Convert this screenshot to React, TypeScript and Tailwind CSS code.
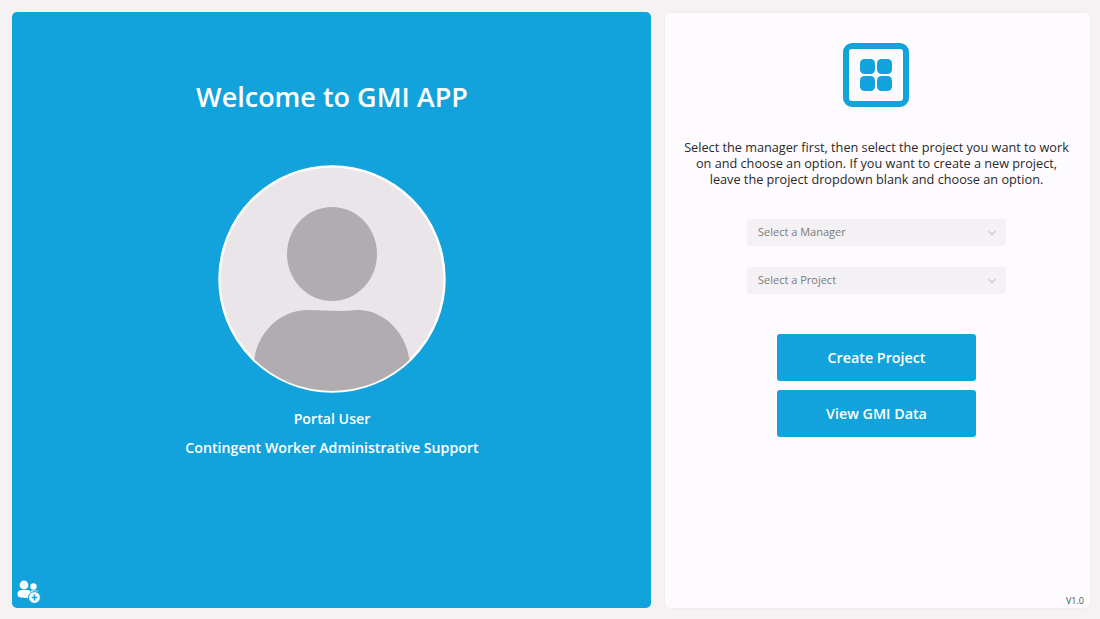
import { ChevronDown } from 'lucide-react';

function Avatar() {
  return (
    <svg viewBox="0 0 228 228" className="h-[228px] w-[228px]">
      <defs>
        <clipPath id="avatar-clip">
          <circle cx="114" cy="114" r="112" />
        </clipPath>
      </defs>
      <circle cx="114" cy="114" r="112.5" fill="#e9e5e9" stroke="#ffffff" strokeWidth="2.5" />
      <g clipPath="url(#avatar-clip)" fill="#b0acaf">
        <ellipse cx="114" cy="89" rx="45" ry="47" />
        <path d="M36 198 C38 168 62 145 90 145 C106 145 122 147 138 145 C166 144 189 168 192 198 L192 228 L36 228 Z" />
      </g>
    </svg>
  );
}

function AppLogo() {
  return (
    <svg viewBox="0 0 66 64" className="mr-[2px] h-16 w-[66px]" fill="#12a3dd">
      <rect x="3" y="3" width="60" height="58" rx="6" fill="none" stroke="#12a3dd" strokeWidth="6" />
      <rect x="17" y="16" width="15" height="15" rx="4.5" />
      <rect x="34" y="16" width="15" height="15" rx="4.5" />
      <rect x="17" y="33" width="15" height="15" rx="4.5" />
      <rect x="34" y="33" width="15" height="15" rx="4.5" />
    </svg>
  );
}

function AddUsersIcon() {
  return (
    <svg viewBox="0 0 24 24" className="h-6 w-6">
      <circle cx="7" cy="5" r="4.4" fill="#ffffff" />
      <path d="M0.5 14 C0.5 11 3 10 5 10 L10.5 10 C12.5 10 13.5 11 14 12.5 C12 14 11 16 11 18 L3.5 17.5 C1.5 17.2 0.5 16 0.5 14 Z" fill="#ffffff" />
      <circle cx="16.5" cy="6.5" r="3.2" fill="#ffffff" />
      <path d="M14 10.5 L19.5 10.5 C20.5 10.5 21 11 21.3 11.5 C18 10.8 15.5 11.5 14.5 12.5 Z" fill="#ffffff" />
      <circle cx="17.5" cy="17.5" r="5.8" fill="#ffffff" stroke="#12a3dd" strokeWidth="0.8" />
      <path d="M17.5 14.6 V20.4 M14.6 17.5 H20.4" stroke="#12a3dd" strokeWidth="1.6" />
    </svg>
  );
}

function SelectBox({ label }: { label: string }) {
  return (
    <div className="flex h-[27px] w-[259px] items-center justify-between rounded-[3px] bg-[#f3f1f3] pr-[8px] pl-[11px] text-[11px] text-[#7d7a7d]">
      <span>{label}</span>
      <ChevronDown className="h-3 w-3 text-[#8d8a8d]" strokeWidth={1.5} />
    </div>
  );
}

function ActionButton({ label }: { label: string }) {
  return (
    <button className="h-[47px] w-[199px] rounded-[3px] bg-[#12a3dd] text-[14.3px] font-semibold text-white">
      {label}
    </button>
  );
}

export default function App() {
  return (
    <div className="flex h-[619px] w-[1100px] gap-[14px] overflow-hidden bg-[#f5f2f4] pt-3 pr-[10px] pb-[11px] pl-3 font-['Open_Sans',sans-serif]">
      <section className="relative flex w-[639px] shrink-0 flex-col items-center rounded-[5px] bg-[#12a3dd] pt-[65px] pl-px text-white">
        <h1 className="text-[27px] leading-10 font-semibold">Welcome to GMI APP</h1>
        <div className="mt-[48px]">
          <Avatar />
        </div>
        <p className="mt-[14px] text-[14.2px] leading-6 font-semibold">Portal User</p>
        <p className="mt-[5px] text-[14.2px] leading-6 font-semibold">Contingent Worker Administrative Support</p>
        <div className="absolute bottom-1 left-[5px]">
          <AddUsersIcon />
        </div>
      </section>

      <section className="relative mt-px flex w-[425px] shrink-0 flex-col items-center rounded-[5px] bg-[#fdfbfd] pt-[30px] pr-[2px] shadow-[0_0_2px_rgba(0,0,0,0.08)]">
        <AppLogo />
        <p className="mt-[32px] w-[390px] text-center text-[12.7px] leading-4 text-[#2a282a]">
          Select the manager first, then select the project you want to work on and choose an option. If you want to create a new project, leave the project dropdown blank and choose an option.
        </p>
        <div className="mt-[32px] flex flex-col gap-[21px]">
          <SelectBox label="Select a Manager" />
          <SelectBox label="Select a Project" />
        </div>
        <div className="mt-[40px] flex flex-col gap-[9px]">
          <ActionButton label="Create Project" />
          <ActionButton label="View GMI Data" />
        </div>
        <span className="absolute right-[6px] bottom-[1px] text-[9px] text-[#4f4c4f]">V1.0</span>
      </section>
    </div>
  );
}
